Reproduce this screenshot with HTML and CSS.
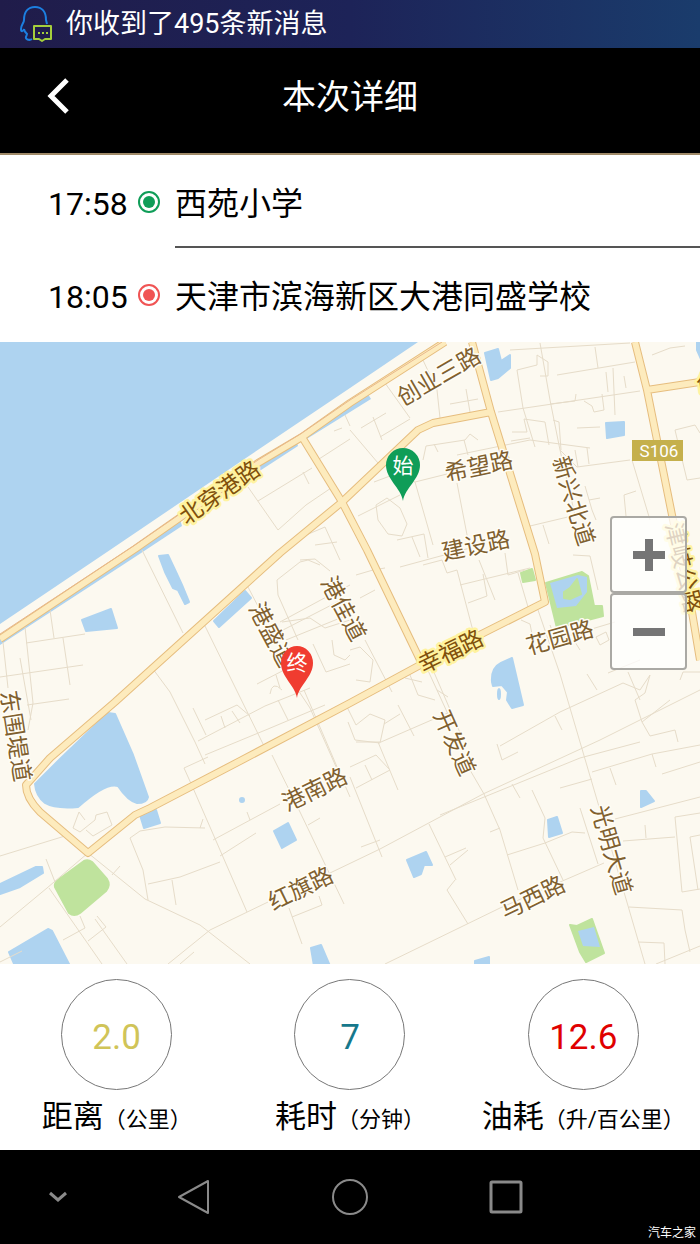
FILE: index.html
```
<!DOCTYPE html>
<html lang="zh-CN">
<head>
<meta charset="UTF-8">
<meta name="viewport" content="width=device-width, initial-scale=1.0">
<title>本次详细</title>
<link rel="stylesheet" href="styles.css">
</head>
<body>

<div class="statusBar">
  <svg class="statusIcon" width="32" height="36" viewBox="0 0 32 36" fill="none" stroke-width="2">
    <path d="M12 33C9 35 5 33 6 31L7 28C5 26 4 24 4 23C3 26 1 26 1 23C1 19 4 17 4 14C4 6 8 1 15 1C22 1 26 6 26 14L27 18" stroke="#1c7fe0"/>
    <path d="M14 20H31V33H25L22 35L19 33H14Z" stroke="#a5cf3c" stroke-linejoin="round"/>
    <path d="M18 27H28" stroke="#a5cf3c" stroke-dasharray="2 2"/>
  </svg>
  <span>你收到了495条新消息</span>
</div>

<header class="header">
  <button class="backButton" aria-label="返回">
    <svg width="24" height="36" viewBox="0 0 24 36"><path d="M21 2L5 18L21 34" fill="none" stroke="#fff" stroke-width="5"/></svg>
  </button>
  <h1>本次详细</h1>
</header>

<!-- Start and end of the trip -->
<ul class="trip">
  <li class="tripStop">
    <time>17:58</time>
    <span class="dot dotStart"></span>
    <span class="place">西苑小学</span>
  </li>
  <li class="tripStop">
    <time>18:05</time>
    <span class="dot dotEnd"></span>
    <span class="place">天津市滨海新区大港同盛学校</span>
  </li>
</ul>

<div class="map">
  <svg class="mapCanvas" viewBox="0 342 700 622">
    <!-- Sea and canal -->
    <g class="water">
      <path d="M0 342H418L350 388L240 462L110 550L0 624Z"/>
      <path d="M0 645L135 557L182 526L180 519L135 548L0 636Z"/>
      <path d="M258 472L298 446L296 439L256 465Z"/>
      <path d="M305 440L371 399L368 394L303 434Z"/>
    </g>

    <!-- Lakes -->
    <g class="water lake">
      <path d="M159 556L168 555L176 572L182 585L189 602L185 604L178 590L173 588L165 572Z"/>
      <path d="M82 620L111 609L117 628L86 631Z"/>
      <path d="M214 621L245 591L251 598L219 627Z"/>
      <path d="M108 713L115 714L133 755L148 797Q147 803 137 803Q128 801 118 786Q106 782 78 807Q55 809 45 803Q36 796 35 784L60 759Z"/>
      <path d="M140 815L156 810L160 823L144 828Z"/>
      <path d="M0 884L36 867L42 867L43 873L20 887L0 894Z"/>
      <path d="M9 952L48 929L52 931L70 966H15Z"/>
      <path d="M274 831L288 823L296 840L282 848Z"/>
      <circle cx="242" cy="800" r="2"/>
      <path d="M311 948L321 945L330 966H314Z"/>
      <path d="M407 860L426 852L432 865L424 865L421 874L414 877Z"/>
      <path d="M548 820L557 817L562 833L549 837Z"/>
      <path d="M641 791L646 791L654 801L641 807Z"/>
      <path d="M475 961L489 957V966H475Z"/>
      <path d="M485 353L498 349L501 361L510 355V368L498 378L491 380Z"/>
      <path d="M606 423L624 422L624 435L607 438Z"/>
      <path d="M492 682Q491 668 501 663L512 658L523 705L512 708L507 700L508 692L502 685L493 686Z"/>
      <ellipse cx="499" cy="694" rx="1" ry="5"/>
      <path d="M697 342H701V359L697 350Z"/>
    </g>

    <!-- Parks -->
    <g class="park">
      <path d="M55 887Q54 883 58 880L84 861Q88 859 92 862L107 879Q111 885 106 891L80 913Q74 917 69 913Z"/>
      <path d="M546 583L582 572L588 576L594 606L602 606L603 616L557 628Z"/>
      <path d="M521 573L532 569L535 580L523 582Z"/>
      <path d="M570 925L577 926L592 919L604 953L586 962L580 952Z"/>
    </g>
    <path class="water" d="M550 583L578 575L587 577L587 592L576 606L557 608Z"/>
    <path class="water" d="M578 931L594 927L600 947L583 946Z"/>
    <path class="park" d="M564 592L570 588L577 579L581 594L570 599L564 598Z"/>

    <!-- Small streets -->
    <g class="street">
      <path d="M385 383L410 418M422 358L437 390L440 418M450 404L478 399M466 389L470 412M361 428L386 413M373 417L382 440M380 437L410 419M350 430L378 463"/>
      <path d="M498 412L532 407L640 391M517 370L523 408L535 447M540 343L550 400L560 450L575 515M557 375L635 362M595 347L598 368M510 350L630 343M652 355L670 348L685 346M613 368L615 415M606 372L608 392M624 376L626 388"/>
      <path d="M550 404L575 401L576 394M584 401L592 406L594 412L604 410L602 394M512 432H527L524 419L545 422L549 445M577 428L600 427M511 441L530 438M553 420L559 422L561 450M517 370L537 365V355L548 362V376H540"/>
      <path d="M423 460L426 446L465 440L470 434L478 440M464 440L468 455M434 444L438 452M457 455L530 440L590 448M560 450L577 467L630 460M575 450L578 467M587 448L589 464M457 483L468 540M415 482L447 474M415 482L433 545M358 516L400 495M374 482L390 476L415 482M376 505L387 498L400 508L407 524L402 536L388 534L378 520ZM397 540L424 534L428 558M412 537L420 557"/>
      <path d="M530 526L572 516M543 525L549 544M585 486L592 510L596 520M589 500L600 498M632 460L650 520M626 516L624 495L636 491M675 430L695 425L700 433M675 430L687 480L700 478"/>
      <path d="M248 487L278 530L306 505L334 486M258 501L312 468M303 472L309 484M319 459L350 439M334 431L342 428M345 415L350 426M282 550L306 535L325 527L340 560M315 545L337 542"/>
      <path d="M300 560L315 559L330 571M277 580L300 562L308 560L320 565M277 580L278 595L298 640M280 622L330 595L350 585M283 630L345 598M286 640L350 614M282 622L310 618L325 628L350 620M313 644L326 672L350 664M332 640L334 655L345 660L350 655M356 575L373 570L385 568M360 598L375 590M365 640L392 692M350 650L360 647L373 660L370 682L356 680"/>
      <path d="M142 550L183 633M205 626L265 748M150 665L170 692L195 742L205 764M248 587L260 610M198 741L265 706L310 688M205 755L268 729L325 705M193 708L206 735M205 720L237 705L250 716M221 716L225 728M232 711L240 723M257 684L290 667M276 675L280 688M270 694Q272 680 282 690M278 700L288 720M300 693L310 708L345 787M304 690L350 797"/>
      <path d="M50 610L54 638M25 627L33 703M0 677L83 665M26 643L85 634M63 638L70 685M27 705L69 699M20 658L31 720M3 642L8 688M33 703L28 730"/>
      <path d="M423 565L442 560L447 573L457 570L478 650M400 567L470 548M460 585L530 568M468 603L487 596L483 574M505 553L508 575L525 570M518 573L528 607M479 560L495 600M521 620L530 624L532 634M538 610L560 674L600 810L645 964M550 625L556 640M425 664L453 725M430 663L461 735M410 675L418 695L435 700M405 678L422 682M437 690L448 697M555 640L615 622M575 642L580 650M596 637L606 632L609 640L600 645ZM573 520L576 545L595 540M573 555L590 556L598 590"/>
      <path d="M345 703L356 725L370 714L385 720L380 743L355 740L348 722M384 724L400 714M398 705L414 736M356 742L381 742L450 712M378 742L398 790M500 746L560 712L623 683M497 744L502 760L518 752M555 716L562 730M587 674L597 690M623 683L640 690L650 675L645 693L635 700L642 722L670 700M608 673L640 660M680 680L683 672H700M628 672L640 700M642 722L650 736L675 730L678 742"/>
      <path d="M0 962L22 951M0 856L65 836M0 927L47 888L88 853L145 899L200 925L250 964M46 859L55 882M49 888L102 964M63 940L85 928L80 916M88 941L106 927L97 916M95 919L127 964M85 820L79 812L73 828L80 832L95 820L96 815L107 812L112 825L93 836L86 830M130 838L140 831L165 827L205 828M130 838L143 870L148 900M148 884L180 877L220 862M172 880L176 905M112 875L120 866M184 768L193 788L247 912M184 768L208 757M203 819L200 828M213 840L280 804M220 856L256 833M247 812L250 820M168 964L210 930L268 902M180 964L194 952M272 755L300 812L344 904M289 908L302 944M292 917L322 905L319 896M308 825L320 818M330 873L380 849L483 794L600 740L700 690"/>
      <path d="M350 767L376 755L390 770L356 788M350 777L382 857M365 765L372 780M361 847L380 840M429 824L456 880M445 857L466 848M450 865L468 850M455 880L447 890L468 924M440 815L580 758L640 742M385 964L500 908L604 863M470 770L484 794L500 830L518 890M490 832L500 828M512 784L520 798M532 790L545 818L543 838L563 880M507 855L545 843L572 832L585 833M580 808L598 864M560 788L592 779M592 772L652 754L700 745M615 819L700 797M623 841L675 837M645 825L646 838M675 817L700 813M675 817L682 892L700 889M690 837L698 890M690 837L700 835M629 907L682 910L685 930L690 952M638 942L664 943L665 964M656 964L700 946M610 768L616 785M652 754L656 767M662 774L700 762"/>
    </g>

    <!-- Main roads: dark casing first, then the fill -->
    <g class="roadCase">
      <path d="M445 342L350 403L302 437L258 463L135 549L0 639"/>
      <path d="M302 437L342 502L367 550L422 664"/>
      <path d="M491 412L433 423L418 430L342 502L280 553L115 702L50 758L26 785Q26 798 40 812L88 853L135 815L150 808L240 761L350 703L422 664L545 602L535 554L491 412L472 342"/>
      <path d="M635 342L647 390L672 515L690 600L700 660M647 390L700 382"/>
    </g>
    <g class="roadFill">
      <path d="M445 342L350 403L302 437L258 463L135 549L0 639"/>
      <path d="M302 437L342 502L367 550L422 664"/>
      <path d="M491 412L433 423L418 430L342 502L280 553L115 702L50 758L26 785Q26 798 40 812L88 853L135 815L150 808L240 761L350 703L422 664L545 602L535 554L491 412L472 342"/>
      <path d="M635 342L647 390L672 515L690 600L700 660M647 390L700 382"/>
    </g>
    <path class="railway" d="M442 342L350 400L302 433L258 460L135 545L0 634"/>

    <!-- Road names -->
    <g class="roadName">
      <text transform="translate(439 377) rotate(-30)">创业三路</text>
      <text transform="translate(479 467) rotate(-12)">希望路</text>
      <text transform="translate(476 546) rotate(-12)">建设路</text>
      <text transform="translate(560 638) rotate(-16)">花园路</text>
      <text transform="translate(315 790) rotate(-26)">港南路</text>
      <text transform="translate(301 889) rotate(-26)">红旗路</text>
      <text transform="translate(533 898) rotate(-26)">马西路</text>
      <text transform="translate(573 501) rotate(73)">新兴北道</text>
      <text transform="translate(343 609) rotate(62)">港佳道</text>
      <text transform="translate(271 635) rotate(62)">港盛道</text>
      <text transform="translate(15 736) rotate(81)">东围堤道</text>
      <text transform="translate(454 743) rotate(66)">开发道</text>
      <text transform="translate(611 850) rotate(74)">光明大道</text>
    </g>
    <g class="roadName mainRoad">
      <text transform="translate(220 493) rotate(-35)">北穿港路</text>
      <text transform="translate(451 652) rotate(-26)">幸福路</text>
      <text transform="translate(683 568) rotate(77)">津岐公路</text>
      <text transform="translate(708 384) rotate(-8)">创</text>
    </g>

    <rect x="632" y="440" width="51" height="21" fill="#c5b04c"/>
    <text class="routeNumber" x="659" y="451">S106</text>

    <!-- Start and end pins -->
    <path d="M403 501C401 488 386 479 386 465A17 17 0 0 1 420 465C420 479 405 488 403 501Z" fill="#0f9d58"/>
    <text class="pinText" x="403" y="466">始</text>
    <path d="M297 698C295 685 281 677 281 663A16 17 0 0 1 313 663C313 677 299 685 297 698Z" fill="#f03c30"/>
    <text class="pinText" x="297" y="663">终</text>
  </svg>

  <div class="zoomControl">
    <button class="zoomButton" aria-label="放大">
      <svg width="32" height="32" viewBox="0 0 32 32"><path d="M0 16H32M16 0V32" stroke="#757575" stroke-width="8"/></svg>
    </button>
    <button class="zoomButton" aria-label="缩小">
      <svg width="32" height="32" viewBox="0 0 32 32"><path d="M0 16H32" stroke="#757575" stroke-width="8"/></svg>
    </button>
  </div>
</div>

<div class="stats">
  <div class="stat">
    <div class="circle distance">2.0</div>
    <div class="statLabel">距离<small>（公里）</small></div>
  </div>
  <div class="stat">
    <div class="circle duration">7</div>
    <div class="statLabel">耗时<small>（分钟）</small></div>
  </div>
  <div class="stat">
    <div class="circle fuel">12.6</div>
    <div class="statLabel">油耗<small>（升/百公里）</small></div>
  </div>
</div>

<nav class="navBar">
  <button class="navButton" aria-label="收起">
    <svg width="20" height="36" viewBox="0 0 20 36"><path d="M2 14L10 21L18 14" stroke-width="3"/></svg>
  </button>
  <button class="navButton" aria-label="后退">
    <svg width="36" height="36" viewBox="0 0 36 36"><path d="M32 2V34L3 18Z" stroke-width="2" stroke-linejoin="round"/></svg>
  </button>
  <button class="navButton" aria-label="主页">
    <svg width="36" height="36" viewBox="0 0 36 36"><circle cx="18" cy="18" r="17" stroke-width="2"/></svg>
  </button>
  <button class="navButton" aria-label="最近任务">
    <svg width="36" height="36" viewBox="0 0 36 36"><rect x="3" y="3" width="30" height="30" rx="1" stroke-width="3"/></svg>
  </button>
  <span class="watermark">汽车之家</span>
</nav>

</body>
</html>
```
FILE: styles.css
```
* {
  box-sizing: border-box;
}

body {
  margin: 0;
  font-family: Roboto, "Noto Sans CJK SC", sans-serif;
  background-color: #fff;
  color: #000;
}

button {
  padding: 0;
  border: none;
  background: none;
  cursor: pointer;
}

svg {
  display: block;
}

/* Phone status bar */
.statusBar {
  display: flex;
  align-items: center;
  gap: 14px;
  height: 48px;
  padding-left: 20px;
  background: linear-gradient(to right, #201c4a, #1d2358 50%, #1a3c6c);
  color: #fff;
  font-size: 27px;
  line-height: 48px;
}

/* Page header */
.header {
  display: grid;
  grid-template-columns: 60px 1fr 60px;
  align-items: center;
  height: 107px;
  padding: 0 28px 10px;
  background-color: #000;
  border-bottom: 2px solid #a08a68;
  color: #fff;
}

.header h1 {
  margin: 0;
  padding-top: 3px;
  text-align: center;
  font-size: 34px;
  font-weight: normal;
  line-height: 48px;
}

.backButton {
  display: flex;
  justify-content: center;
}

/* Trip start and end */
.trip {
  margin: 0;
  padding: 0 0 1px 48px;
  list-style: none;
}

.tripStop {
  display: grid;
  grid-template-columns: 80px 47px 1fr;
  align-items: center;
  font-size: 32px;
}

.tripStop time {
  padding-top: 6px;
  line-height: 87px;
}

.place {
  padding-top: 8px;
  border-bottom: 2px solid transparent;
  line-height: 83px;
  white-space: nowrap;
}

.tripStop:first-child .place {
  border-color: #555;
}

.dot {
  width: 22px;
  height: 22px;
  margin-left: 10px;
  border: 2px solid;
  border-radius: 50%;
  padding: 3px;
  background-color: currentColor;
  background-clip: content-box;
}

.dotStart {
  color: #0f9d58;
}

.dotEnd {
  color: #f05454;
}

/* Map */
.map {
  position: relative;
}

.mapCanvas {
  width: 100%;
  height: auto;
  background-color: #fcf9f0;
}

.water {
  fill: #aed3f0;
}

/* Outline in the fill colour rounds the corners */
.lake {
  stroke: #aed3f0;
  stroke-width: 2;
  stroke-linejoin: round;
}

.park {
  fill: #bfe39d;
  stroke: #bfe39d;
  stroke-width: 2;
  stroke-linejoin: round;
}

.street {
  fill: none;
  stroke: #e6dcc9;
  stroke-width: 1;
}

.roadCase {
  fill: none;
  stroke: #e6bd7e;
  stroke-width: 8;
  stroke-linejoin: round;
}

.roadFill {
  fill: none;
  stroke: #fdebbd;
  stroke-width: 6;
  stroke-linejoin: round;
}

.railway {
  fill: none;
  stroke: #e8b88c;
  stroke-width: 1;
}

.roadName {
  fill: #80602f;
  stroke: #fffdf5;
  stroke-width: 3;
  stroke-linejoin: round;
  paint-order: stroke;
  font-size: 23px;
  text-anchor: middle;
  dominant-baseline: central;
}

.mainRoad {
  fill: #80500c;
  stroke: #fff3a0;
  stroke-width: 5;
}

.routeNumber {
  fill: #fff;
  font-size: 17px;
  text-anchor: middle;
  dominant-baseline: central;
}

.pinText {
  fill: #fff;
  font-size: 21px;
  text-anchor: middle;
  dominant-baseline: central;
}

/* Zoom buttons lie over the map */
.zoomControl {
  position: absolute;
  top: 28%;
  right: 13px;
  display: flex;
  flex-direction: column;
}

.zoomButton {
  display: flex;
  align-items: center;
  justify-content: center;
  width: 77px;
  height: 77px;
  border: 2px solid #aaa9a4;
  border-radius: 4px;
  background-color: rgba(255, 255, 255, 0.75);
}

/* Trip numbers */
.stats {
  display: grid;
  grid-template-columns: repeat(3, 1fr);
  padding: 15px 0 9px;
}

.stat {
  display: flex;
  flex-direction: column;
  align-items: center;
}

.circle {
  width: 111px;
  height: 111px;
  border: 1px solid #777;
  border-radius: 50%;
  text-align: center;
  font-size: 35px;
  line-height: 115px;
}

.distance {
  color: #d0c458;
}

.duration {
  color: #16788c;
}

.fuel {
  color: #e00000;
}

.statLabel {
  padding-top: 3px;
  font-size: 31px;
  line-height: 48px;
  white-space: nowrap;
}

.statLabel small {
  font-size: 22px;
  line-height: 22px;
}

/* Phone navigation bar */
.navBar {
  position: relative;
  display: grid;
  grid-template-columns: 3fr 4fr 4fr 4fr 3fr;
  align-items: center;
  height: 94px;
  background-color: #000;
}

.navButton {
  display: flex;
  justify-content: center;
}

.navButton svg {
  fill: none;
  stroke: #8a8a8a;
}

.watermark {
  position: absolute;
  right: 4px;
  bottom: 2px;
  color: #fff;
  font-size: 12px;
  line-height: 18px;
}
```
